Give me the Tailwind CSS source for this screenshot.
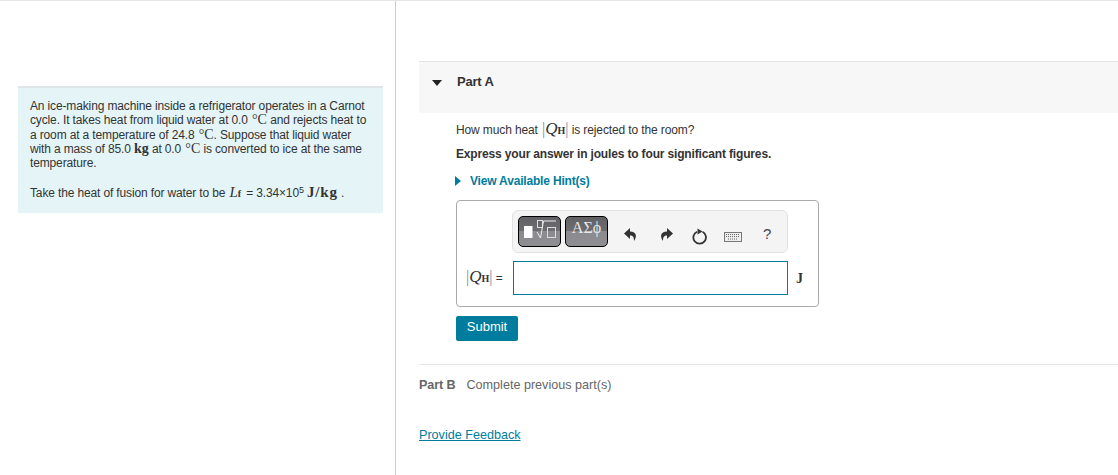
<!DOCTYPE html>
<html lang="en">
<head>
    <meta charset="UTF-8">
    <meta name="viewport" content="width=device-width, initial-scale=1.0">
    <title>Part A</title>
    <script src="https://cdn.jsdelivr.net/npm/@tailwindcss/browser@4"></script>
</head>
<body class="bg-white text-[#333] font-['Liberation_Sans',Arial,sans-serif] overflow-hidden">
    <div class="flex w-[1118px] h-[475px] border-t border-[#e5e5e5]">

        <!-- Problem statement -->
        <aside class="w-[396px] shrink-0 border-r border-[#ccc] pl-[18px] pr-[12px] pt-[85px]">
            <div class="h-[127px] bg-[#e5f5f7] border-t-2 border-[#dde5e7] px-[12px] pt-[11px] text-[12px] leading-[14.25px] tracking-[-0.14px] text-[#333] whitespace-nowrap">
                <p>An ice-making machine inside a refrigerator operates in a Carnot<br>
                cycle. It takes heat from liquid water at 0.0 <span class="font-['Liberation_Serif',serif] text-[14px] leading-[0] tracking-normal ml-[1px]">°C</span> and rejects heat to<br>
                a room at a temperature of 24.8 <span class="font-['Liberation_Serif',serif] text-[14px] leading-[0] tracking-normal ml-[1px]">°C</span>. Suppose that liquid water<br>
                with a mass of 85.0 <span class="font-['Liberation_Serif',serif] font-bold text-[14px] leading-[0] tracking-normal">kg</span> at 0.0 <span class="font-['Liberation_Serif',serif] text-[14px] leading-[0] tracking-normal ml-[1px]">°C</span> is converted to ice at the same<br>
                temperature.</p>
                <p class="mt-[16px]">Take the heat of fusion for water to be <span class="font-['Liberation_Serif',serif] text-[15px] leading-[0] ml-[1px] mr-[2px]"><i>L</i><b class="text-[10px] leading-[0]">f</b></span> = 3.34×10<sup class="text-[9px] top-[-4px] leading-[0]">5</sup> <span class="font-['Liberation_Serif',serif] font-bold text-[15px] leading-[0] tracking-[0.8px]">J/kg</span> .</p>
            </div>
        </aside>

        <!-- Parts -->
        <main class="flex-1 pl-[23px] pt-[60px]">
            <div class="h-[52px] bg-[#f7f7f7] border-t border-[#e5e5e5] flex items-start pt-[12px] pl-[13px]">
                <svg class="w-[10px] h-[6px] mt-[6px]" viewBox="0 0 10 6"><path d="M0 0h10L5 6z" fill="#222"/></svg>
                <h2 class="ml-[15px] text-[13px] leading-[16px] font-bold text-[#333] tracking-[-0.2px]">Part A</h2>
            </div>

            <div class="pl-[37px] w-[420px]">
                <p class="mt-[9px] text-[12px] leading-[16px] tracking-[-0.12px] flex items-center h-[16px] whitespace-pre">How much heat <span class="ml-[1px] font-['Liberation_Serif',serif] text-[16px] tracking-normal leading-[16px]"><span class="text-[#7a8a99]">|</span><i class="text-[17px]">Q</i><b class="text-[10px]">H</b><span class="text-[#7a8a99]">|</span></span> is rejected to the room?</p>
                <p class="mt-[8px] text-[12px] leading-[16px] font-bold tracking-[-0.155px]">Express your answer in joules to four significant figures.</p>
                <a class="mt-[11px] -ml-[1px] flex items-center text-[12px] leading-[16px] font-bold tracking-[-0.18px] text-[#007c9e]">
                    <svg class="w-[6px] h-[10px]" viewBox="0 0 6 10"><path d="M0 0l6 5-6 5z" fill="#007c9e"/></svg>
                    <span class="ml-[9px]">View Available Hint(s)</span>
                </a>

                <!-- Answer box -->
                <div class="mt-[11px] w-[363px] h-[107px] border border-[#aaa] rounded-[4px] relative pl-[9px] pt-[9px]">
                    <div class="ml-[46px] w-[276px] h-[43px] bg-[#f4f4f4] border border-[#e2e2e2] rounded-[6px] flex items-center pl-[5px]">
                        <div class="w-[43px] h-[31px] rounded-[5px] border border-black bg-[linear-gradient(#616165_0%,#6e6e72_50%,#8b8b8f_50%,#8e8e92_100%)]">
                            <svg width="41" height="29" viewBox="0 0 41 29" fill="none">
                                <rect x="5" y="9" width="8.500" height="12" fill="#fff"/>
                                <rect x="18.500" y="3.500" width="5" height="7" stroke="#ddd"/>
                                <path d="M18 15l3.500 6 3-17H37" stroke="#eee"/>
                                <rect x="28.500" y="10.500" width="8" height="10" stroke="#ddd"/>
                            </svg>
                        </div>
                        <div class="ml-[4px] w-[43px] h-[31px] rounded-[5px] border border-black bg-[linear-gradient(#616165_0%,#6e6e72_50%,#8b8b8f_50%,#8e8e92_100%)] flex items-start justify-center pt-[3px] font-['Liberation_Serif',serif] text-[16px] leading-[16px] text-[#e8e8e8]">ΑΣϕ</div>
                        <svg class="ml-[16px] mt-[7px]" width="14" height="14" viewBox="0 0 14 14"><path d="M6 0L0 5.500 6 11V7.500C9 7.500 10 9 10 13 13 9 13 3.500 6 3.500z" fill="#333"/></svg>
                        <svg class="ml-[21px] mt-[7px]" width="14" height="14" viewBox="0 0 14 14"><path d="M8 0l6 5.500L8 11V7.500C5 7.500 4 9 4 13 1 9 1 3.500 8 3.500z" fill="#333"/></svg>
                        <svg class="ml-[19px] mt-[9px]" width="16" height="17" viewBox="0 0 16 17" fill="none"><path d="M10.500 3.800A6.300 6.300 0 1 1 5 3.700" stroke="#333" stroke-width="1.800"/><path d="M5.500 0.500l5 3-5 3z" fill="#333"/></svg>
                        <svg class="ml-[16px] mt-[11px]" width="18" height="10" viewBox="0 0 18 10"><rect width="18" height="10" fill="#777"/><rect x="1" y="1" width="16" height="8" fill="#eee"/><path d="M2 2.500h14M2 4.500h14M4 7h10" stroke="#666" stroke-dasharray="1 1"/></svg>
                        <span class="ml-[21px] mt-[5px] text-[15px] leading-[16px] text-[#444]">?</span>
                    </div>

                    <div class="flex items-center mt-[8px]">
                        <span class="w-[47px] text-[12px] whitespace-pre"><span class="font-['Liberation_Serif',serif] text-[16px] leading-[16px]"><span class="text-[#7a8a99]">|</span><i class="text-[17px]">Q</i><b class="text-[10px]">H</b><span class="text-[#7a8a99]">|</span></span> =</span>
                        <input type="text" class="w-[275px] h-[34px] border border-[#007c9e] bg-white">
                        <span class="ml-[8px] font-['Liberation_Serif',serif] font-bold text-[14px]">J</span>
                    </div>
                </div>

                <button class="mt-[9px] w-[62px] h-[25px] rounded-[2px] bg-[#007c9e] text-white text-[13px] pb-[3px]">Submit</button>
            </div>

            <div class="mt-[23px] border-t border-[#e5e5e5] pt-[12px] text-[12.600px] leading-[16px] text-[#666] flex">
                <span class="font-bold tracking-[-0.1px]">Part B</span>
                <span class="ml-[11px]">Complete previous part(s)</span>
            </div>
            <a class="block mt-[34px] text-[12.600px] leading-[16px] text-[#007c9e] underline">Provide Feedback</a>
        </main>
    </div>
</body>
</html>
